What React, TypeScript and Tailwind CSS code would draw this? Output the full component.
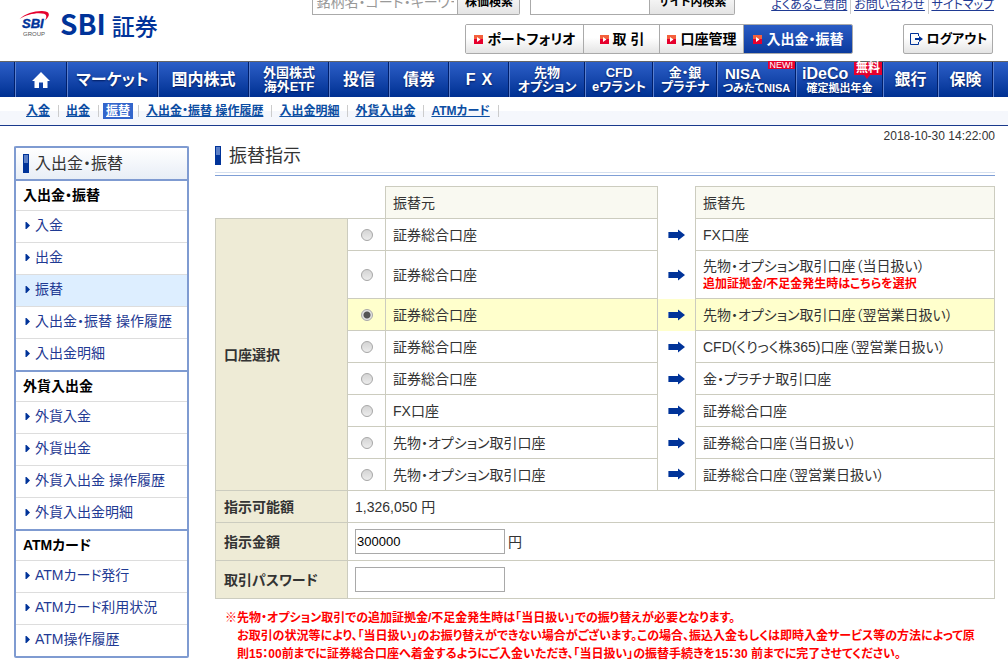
import type { ReactNode } from "react";

const BASE =
  "font-['Liberation_Sans','Noto_Sans_CJK_JP',sans-serif] [font-feature-settings:'palt']";

const sideMenu = [
  {
    title: "入出金・振替",
    items: ["入金", "出金", "振替", "入出金・振替 操作履歴", "入出金明細"],
    active: "振替",
  },
  {
    title: "外貨入出金",
    items: ["外貨入金", "外貨出金", "外貨入出金 操作履歴", "外貨入出金明細"],
  },
  {
    title: "ATMカード",
    items: ["ATMカード発行", "ATMカード利用状況", "ATM操作履歴"],
  },
];

const subNav = [
  "入金",
  "出金",
  "振替",
  "入出金・振替 操作履歴",
  "入出金明細",
  "外貨入出金",
  "ATMカード",
];

const transfers: { from: string; to: string; note?: string }[] = [
  { from: "証券総合口座", to: "FX口座" },
  {
    from: "証券総合口座",
    to: "先物・オプション取引口座（当日扱い）",
    note: "追加証拠金/不足金発生時はこちらを選択",
  },
  { from: "証券総合口座", to: "先物・オプション取引口座（翌営業日扱い）" },
  { from: "証券総合口座", to: "CFD(くりっく株365)口座（翌営業日扱い）" },
  { from: "証券総合口座", to: "金・プラチナ取引口座" },
  { from: "FX口座", to: "証券総合口座" },
  { from: "先物・オプション取引口座", to: "証券総合口座（当日扱い）" },
  { from: "先物・オプション取引口座", to: "証券総合口座（翌営業日扱い）" },
];

function GroupLogo() {
  return (
    <svg viewBox="0 0 32 28" className="h-7 w-8" aria-label="SBI GROUP">
      <path
        d="M0.5 9 C6 3.5 15 0.8 23 0.9 C29 1 31 3.2 29.3 6.6 C28.6 8 27.5 9.5 26 10.5 C27.8 7.5 28 4.8 25 3.8 C19 2 8 4 0.5 9 Z"
        fill="#e5002d"
      />
      <text
        x="3"
        y="18"
        fontSize="13"
        fontWeight="bold"
        fontStyle="italic"
        fontFamily="Liberation Sans"
        fill="#003399"
        stroke="#003399"
        strokeWidth="0.4"
      >
        SBI
      </text>
      <text x="4" y="26" fontSize="6" fontFamily="Liberation Sans" fill="#555">
        GROUP
      </text>
    </svg>
  );
}

function RedMarker() {
  return (
    <svg viewBox="0 0 9 9" className="h-[9px] w-[9px] shrink-0" aria-hidden="true">
      <rect width="9" height="9" fill="#e6002d" />
      <rect width="9" height="4" fill="#f4603c" />
      <path d="M3 2 L6.5 4.5 L3 7 Z" fill="#fff" />
    </svg>
  );
}

function LogoutIcon() {
  return (
    <svg viewBox="0 0 13 12" className="h-3 w-[13px] shrink-0" aria-hidden="true">
      <path d="M8.5 3 V0.5 H0.5 V11.5 H8.5 V9" fill="none" stroke="#003399" />
      <path d="M5 5 H9 V3 L13 6 L9 9 V7 H5 Z" fill="#003399" />
    </svg>
  );
}

function HomeIcon() {
  return (
    <svg viewBox="0 0 18 16" className="h-4 w-[18px]" aria-label="ホーム">
      <path d="M9 0 L18 9 H15.5 V16 H11 V10.5 H7 V16 H2.5 V9 H0 Z" fill="#fff" />
    </svg>
  );
}

function Arrow() {
  return (
    <svg viewBox="0 0 17 12" className="mx-auto block h-3 w-[17px]" aria-hidden="true">
      <path d="M1 3 H10 V0.5 L17 6 L10 11.5 V9 H1 Z" fill="#003399" />
      <rect y="3" width="1" height="6" fill="#6685c2" />
    </svg>
  );
}

function ItemMarker() {
  return (
    <svg viewBox="0 0 5 7" className="h-[7px] w-[5px] shrink-0" aria-hidden="true">
      <path d="M0 0 H1.5 L5 3.5 L1.5 7 H0 Z" fill="#003399" />
      <rect width="1" height="7" fill="#7f99cc" />
    </svg>
  );
}

function TitleBar() {
  return (
    <svg viewBox="0 0 6 19" className="h-[19px] w-[6px] shrink-0" aria-hidden="true">
      <rect width="6" height="19" fill="#003399" />
      <rect x="1" y="1" width="4" height="8" fill="#5b7fc6" />
    </svg>
  );
}

function NavItem({ width, children }: { width: string; children: ReactNode }) {
  return (
    <a
      href="#"
      className={`relative flex flex-col items-center justify-center border-r border-l border-r-[#001f6b] border-l-[#5b80cf] text-center font-bold whitespace-nowrap text-white [text-shadow:0_1px_2px_#001a5c] ${width}`}
    >
      {children}
    </a>
  );
}

function ToolButton({ children, active }: { children: ReactNode; active?: boolean }) {
  return (
    <button
      type="button"
      className={
        "flex items-center justify-center gap-1 border-r text-[14px] font-bold whitespace-nowrap last:border-r-0 " +
        (active
          ? "border-[#555] bg-linear-to-b from-[#2a5cc4] to-[#0a3a9e] text-white"
          : "border-[#aaa] bg-linear-to-b from-white from-45% to-[#e4e4e4] text-black")
      }
    >
      <RedMarker />
      {children}
    </button>
  );
}

function Header() {
  return (
    <header className="flex h-[61px] overflow-hidden pr-[14px]">
      <div className="flex grow items-start pt-[10px] pl-[19px]">
        <GroupLogo />
        <span className="flex items-baseline gap-[6px] pl-[9px] leading-[26px] font-medium whitespace-nowrap text-[#003399] font-['Noto_Sans_CJK_JP',sans-serif]">
          <span className="text-[28px] font-bold">SBI</span>
          <span className="text-[23px]">証券</span>
        </span>
      </div>
      <div className="flex shrink-0 flex-col">
        <div className="-mt-[11px] flex h-[26px] items-start justify-between gap-9">
          <div className="-ml-[153px] flex h-[26px] gap-[10px]">
            <form className="flex">
              <input
                aria-label="銘柄検索"
                placeholder="銘柄名・コード・キーワード"
                className="w-[146px] border border-[#aaa] bg-white px-[3px] text-[14px] placeholder:text-[#999]"
              />
              <button
                type="button"
                className="w-[62px] rounded-r-xs border border-l-0 border-[#aaa] bg-linear-to-b from-white to-[#e4e4e4] text-[12px] font-bold whitespace-nowrap text-black"
              >
                株価検索
              </button>
            </form>
            <form className="flex">
              <input
                aria-label="サイト内検索"
                className="w-[120px] border border-[#aaa] bg-white px-1 text-[14px]"
              />
              <button
                type="button"
                className="w-[85px] rounded-r-xs border border-l-0 border-[#aaa] bg-linear-to-b from-white to-[#e4e4e4] text-[12px] font-bold whitespace-nowrap text-black"
              >
                サイト内検索
              </button>
            </form>
          </div>
          <div className="flex items-center pt-[7px] text-[12px] leading-[18px] whitespace-nowrap text-[#1f3a93] underline">
            <a href="#" className="pr-[3px]">
              よくあるご質問
            </a>
            <a href="#" className="border-l border-[#ccc] px-[3px]">
              お問い合わせ
            </a>
            <a href="#" className="border-l border-[#ccc] pl-[3px]">
              サイトマップ
            </a>
          </div>
        </div>
        <div className="mt-[9px] flex h-[30px] gap-[50px]">
          <div className="grid grid-cols-[118px_76px_84px_108px] overflow-hidden rounded-xs border border-[#aaa]">
            <ToolButton>ポートフォリオ</ToolButton>
            <ToolButton>取 引</ToolButton>
            <ToolButton>口座管理</ToolButton>
            <ToolButton active>入出金・振替</ToolButton>
          </div>
          <button
            type="button"
            className="flex w-[90px] items-center justify-center gap-1 rounded-xs border border-[#aaa] bg-linear-to-b from-white from-45% to-[#e4e4e4] text-[13px] font-bold whitespace-nowrap text-black"
          >
            <LogoutIcon />
            ログアウト
          </button>
        </div>
      </div>
    </header>
  );
}

function GlobalNav() {
  return (
    <nav className="flex h-9 border-t border-[#666] bg-linear-to-b from-[#2c5fc8] to-[#003092] text-[16px]">
      <div className="w-[15px] border-r border-[#001f6b]" />
      <NavItem width="w-[52px]">
        <HomeIcon />
      </NavItem>
      <NavItem width="w-[91px]">マーケット</NavItem>
      <NavItem width="w-[91px]">国内株式</NavItem>
      <NavItem width="w-[80px]">
        <span className="text-[13px] leading-[14px]">
          外国株式
          <br />
          海外ETF
        </span>
      </NavItem>
      <NavItem width="w-[60px]">投信</NavItem>
      <NavItem width="w-[60px]">債券</NavItem>
      <NavItem width="w-[60px]">
        <span className="flex gap-[6px]">
          <span>F</span>
          <span>X</span>
        </span>
      </NavItem>
      <NavItem width="w-[76px]">
        <span className="text-[13px] leading-[14px]">
          先物
          <br />
          オプション
        </span>
      </NavItem>
      <NavItem width="w-[68px]">
        <span className="text-[13px] leading-[14px]">
          CFD
          <br />
          eワラント
        </span>
      </NavItem>
      <NavItem width="w-[64px]">
        <span className="text-[13px] leading-[14px]">
          金・銀
          <br />
          プラチナ
        </span>
      </NavItem>
      <NavItem width="w-[79px]">
        <span className="self-start pl-[7px] text-[15px] leading-[16px]">NISA</span>
        <span className="text-[11px] leading-[12px]">つみたてNISA</span>
        <span className="absolute -top-px right-0 bg-[#e6002d] px-[2px] text-[9px] leading-[8px] font-normal [text-shadow:none]">
          NEW!
        </span>
      </NavItem>
      <NavItem width="w-[87px]">
        <span className="self-start pl-[5px] text-[16px] leading-[16px]">iDeCo</span>
        <span className="text-[11px] leading-[12px]">確定拠出年金</span>
        <span className="absolute top-0 right-0 bg-[#e6002d] px-[2px] text-[12px] leading-[13px] [text-shadow:none]">
          無料
          <svg
            viewBox="0 0 6 4"
            className="absolute top-full left-[10px] h-1 w-[6px]"
            aria-hidden="true"
          >
            <path d="M0 0 H6 L3 4 Z" fill="#e6002d" />
          </svg>
        </span>
      </NavItem>
      <NavItem width="w-[55px]">銀行</NavItem>
      <NavItem width="w-[55px]">保険</NavItem>
      <div className="grow border-l border-[#5b80cf]" />
    </nav>
  );
}

function SubNav() {
  return (
    <nav className="flex h-[29px] items-center border-b border-[#1a3a8c] bg-linear-to-b from-white from-50% to-[#f5f7fc] to-50% pl-[19px] text-[12px] leading-[16px] font-bold text-[#0b4da2]">
      {subNav.map((label) => (
        <div key={label} className="flex h-3 items-center border-r border-[#ccc] pr-2 pl-[7px]">
          <a
            href="#"
            className={
              "whitespace-nowrap underline " +
              (label === "振替" ? "-mx-[3px] bg-[#3366cc] px-[3px] text-white" : "")
            }
          >
            {label}
          </a>
        </div>
      ))}
    </nav>
  );
}

function Sidebar() {
  return (
    <aside className="w-[175px] shrink-0 self-start rounded-xs border-2 border-b-0 border-[#7f9bd1]">
      <h2 className="flex h-[33px] items-center gap-[6px] border-b-2 border-[#7f9bd1] bg-linear-to-b from-white to-[#e8eef6] pl-[7px] text-[16px] text-[#333]">
        <TitleBar />
        入出金・振替
      </h2>
      {sideMenu.map((section) => (
        <section key={section.title} className="border-b-2 border-[#7f9bd1]">
          <h3 className="flex h-[30px] items-center border-b border-[#ddd] pl-[7px] text-[14px] font-bold text-black">
            {section.title}
          </h3>
          <ul>
            {section.items.map((item) => (
              <li
                key={item}
                className={
                  "h-8 border-b border-[#ddd] last:h-[31px] last:border-b-0 " +
                  (section.active === item ? "bg-[#ddeeff]" : "")
                }
              >
                <a
                  href="#"
                  className="flex h-full items-center gap-[5px] pb-[2px] pl-[9px] text-[14px] whitespace-nowrap text-[#1f3a93]"
                >
                  <ItemMarker />
                  {item}
                </a>
              </li>
            ))}
          </ul>
        </section>
      ))}
    </aside>
  );
}

const headCell = "border border-[#ccccbf] bg-[#f9f9f1] px-[7px] text-left font-normal";
const labelCell = "border border-[#ccccbf] bg-[#eeebd6] px-2 text-left font-bold";
const cell = "border border-[#ccccbf] px-[7px]";

function TransferForm() {
  return (
    <form>
      <table className="w-full table-fixed border-collapse text-[14px] leading-[18px] text-[#333]">
        <colgroup>
          <col className="w-[132px]" />
          <col className="w-[38px]" />
          <col className="w-[272px]" />
          <col className="w-[38px]" />
          <col />
        </colgroup>
        <tbody>
          <tr className="h-8">
            <td colSpan={2} />
            <th scope="col" className={headCell}>
              振替元
            </th>
            <td />
            <th scope="col" className={headCell}>
              振替先
            </th>
          </tr>
          {transfers.map((row, i) => (
            <tr key={i} className={(row.note ? "h-12" : "h-8") + (i === 2 ? " bg-[#ffffcc]" : "")}>
              {i === 0 && (
                <th scope="row" rowSpan={transfers.length} className={labelCell}>
                  口座選択
                </th>
              )}
              <td className="border border-[#ccccbf] text-center">
                <input
                  type="radio"
                  id={`route-${i}`}
                  name="route"
                  defaultChecked={i === 2}
                  className="mx-auto block h-3 w-3 appearance-none rounded-full border border-[#a8a8a8] bg-linear-to-b from-[#d4d4d4] to-[#ececec] checked:bg-[radial-gradient(circle,#555_0_3px,#e2e2e2_4px)]"
                />
              </td>
              <td className={cell}>
                <label htmlFor={`route-${i}`}>{row.from}</label>
              </td>
              <td>
                <Arrow />
              </td>
              <td className={cell}>
                <label htmlFor={`route-${i}`}>{row.to}</label>
                {row.note && (
                  <strong className="block text-[12px] font-bold text-[#ff0000]">{row.note}</strong>
                )}
              </td>
            </tr>
          ))}
          <tr className="h-8">
            <th scope="row" className={labelCell}>
              指示可能額
            </th>
            <td colSpan={4} className={cell}>
              1,326,050 円
            </td>
          </tr>
          <tr className="h-[38px]">
            <th scope="row" className={labelCell}>
              <label htmlFor="amount">指示金額</label>
            </th>
            <td colSpan={4} className={cell}>
              <div className="flex items-center gap-[3px]">
                <input
                  id="amount"
                  defaultValue="300000"
                  className="h-[25px] w-[150px] border border-[#a9a9a9] bg-white px-px text-[13px] text-black"
                />
                円
              </div>
            </td>
          </tr>
          <tr className="h-[38px]">
            <th scope="row" className={labelCell}>
              <label htmlFor="password">取引パスワード</label>
            </th>
            <td colSpan={4} className={cell}>
              <input
                id="password"
                type="password"
                className="block h-[25px] w-[150px] border border-[#a9a9a9] bg-white px-px text-[13px]"
              />
            </td>
          </tr>
        </tbody>
      </table>
    </form>
  );
}

export default function App() {
  return (
    <div className={`bg-white text-[#333] ${BASE}`}>
      <Header />
      <GlobalNav />
      <SubNav />
      <p className="pt-[2px] pr-[13px] text-right text-[12px] leading-[16px]">
        2018-10-30 14:22:00
      </p>
      <div className="flex gap-[26px] pt-[2px] pr-[13px] pl-[14px]">
        <Sidebar />
        <main className="min-w-0 grow">
          <div className="border-b border-[#7f9fd6] pb-[2px]">
            <h1 className="flex h-[27px] items-start gap-2 border-b border-[#d5e0f0] text-[18px] leading-[20px]">
              <TitleBar />
              振替指示
            </h1>
          </div>
          <div className="pt-[10px]">
            <TransferForm />
          </div>
          <div className="flex pt-[10px] pr-3 pl-[10px] text-[12px] leading-[18px] font-bold text-[#ff0000]">
            <span>※</span>
            <p>
              先物・オプション取引での追加証拠金/不足金発生時は「当日扱い」での振り替えが必要となります。
              <br />
              お取引の状況等により、「当日扱い」のお振り替えができない場合がございます。この場合、振込入金もしくは即時入金サービス等の方法によって原則15：00前までに証券総合口座へ着金するようにご入金いただき、「当日扱い」の振替手続きを15：30 前までに完了させてください。
            </p>
          </div>
        </main>
      </div>
    </div>
  );
}
